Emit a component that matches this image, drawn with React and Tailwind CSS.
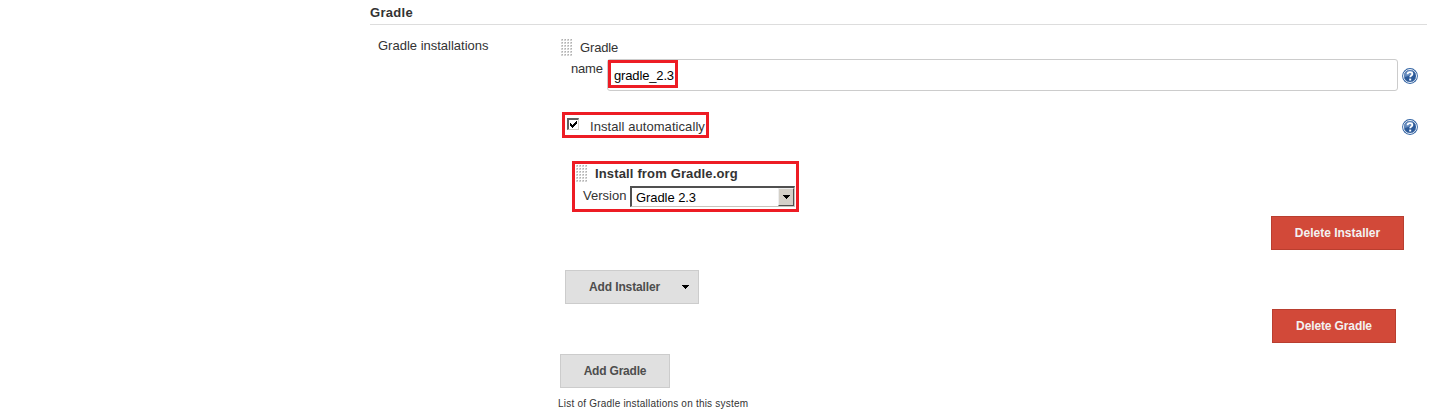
import React from "react";

function Grip() {
  const dots = [];
  for (let r = 0; r < 6; r++)
    for (let c = 0; c < 4; c++)
      dots.push(
        <g key={`${r}-${c}`}>
          <rect x={c * 3} y={r * 3} width="2" height="2" fill="#d4d4d4" />
          <rect x={c * 3 + 1} y={r * 3} width="1" height="1" fill="#b0b0b0" />
        </g>
      );
  return (
    <svg className="block shrink-0" width="12" height="18" viewBox="0 0 12 18" shapeRendering="crispEdges">
      {dots}
    </svg>
  );
}

function Help() {
  return (
    <svg className="block shrink-0" width="16" height="16" viewBox="0 0 16 16">
      <circle cx="8" cy="8" r="7.900" fill="#3465a4" />
      <circle cx="8" cy="8" r="6.500" fill="#2c5a99" stroke="#f0f4fa" strokeWidth="1" />
      <path d="M2.300 9a5.700 5.700 0 0 1 9-5.500c-1 3-4.500 5-9 5.500z" fill="#7d9fcd" opacity="0.700" />
      <path d="M5.500 6.300C5.600 4.700 6.600 4.200 8 4.200c1.500 0 2.400 0.700 2.400 1.900 0 1.500-2.200 1.500-2.200 3.200" fill="none" stroke="#ffffff" strokeWidth="1.800" />
      <rect x="7.200" y="10.600" width="2" height="1.900" fill="#ffffff" />
    </svg>
  );
}

function Arrow() {
  return (
    <svg className="block" width="7" height="4" viewBox="0 0 7 4" shapeRendering="crispEdges">
      <path d="M0 0h7v1H0zM1 1h5v1H1zM2 2h3v1H2zM3 3h1v1H3z" fill="#000" />
    </svg>
  );
}

export default function App() {
  return (
    <div className="h-[414px] w-[1444px] overflow-hidden bg-white pl-[370px] font-['Liberation_Sans',Arial,sans-serif] text-[13px] leading-4 text-[#333333]">
      <h2 className="h-[25px] w-[1057px] border-b border-[#dddddd] pt-[5px] font-bold tracking-[0.300px]">Gradle</h2>
      <div className="flex">
        <div className="w-[188px] shrink-0 pt-[13px] pl-[8px] whitespace-nowrap">Gradle installations</div>
        <div className="w-[870px] shrink-0">
          <div className="flex h-[34px] items-start gap-[7px] pt-[14px] pl-[3px]">
            <Grip />
            <span className="pt-[1px] tracking-[-0.150px]">Gradle</span>
          </div>
          <div className="flex h-8 items-start">
            <span className="w-[49px] pt-[2px] pl-[13px] tracking-[-0.200px]">name</span>
            <div className="h-8 w-[791px] rounded-[3px] border border-[#cccccc]">
              <div className="flex h-7 w-[70px] items-center border-3 border-[#ed1c24] bg-white pt-[4px] pl-[3px] tracking-[-0.150px] text-black">gradle_2.3</div>
            </div>
            <div className="pt-[9px] pl-1"><Help /></div>
          </div>
          <div className="mt-[21px] flex h-[26px] items-start justify-between pr-[10px] pl-1">
            <label className="flex h-[26px] w-[147px] items-start border-3 border-[#ed1c24] pt-[3px] pl-[2px]">
              <span className="flex h-3 w-3 shrink-0 items-center justify-center border-t-2 border-l-2 border-r border-b border-t-[#606060] border-l-[#606060] border-r-[#d4d0c8] border-b-[#d4d0c8]">
                <svg width="7" height="7" viewBox="0 0 7 7" shapeRendering="crispEdges">
                  <path d="M0 2h1v1h1v1h1V3h1V2h1V1h1V0h1v3H6v1H5v1H4v1H3v1H2V6H1V5H0z" fill="#000" />
                </svg>
              </span>
              <span className="pt-[1px] pl-[11px] tracking-[0.070px] whitespace-nowrap">Install automatically</span>
            </label>
            <div className="pt-[7px]"><Help /></div>
          </div>
          <div className="mt-[23px] ml-[14px] h-[51px] w-[227px] border-3 border-[#ed1c24]">
            <div className="flex h-[22px] items-start gap-[7px] pt-[1px] pl-[1px]">
              <Grip />
              <span className="pt-[1px] font-bold tracking-[0.150px] whitespace-nowrap">Install from Gradle.org</span>
            </div>
            <div className="flex items-start pl-2">
              <span className="w-[47px] pt-[2px]">Version</span>
              <div className="flex h-[21px] w-[165px] justify-between border-t-2 border-l-2 border-r border-b border-t-[#505050] border-l-[#505050] border-r-[#c8c4bc] border-b-[#c8c4bc] pl-1 text-black">
                <span className="pt-[2px] tracking-[-0.070px]">Gradle 2.3</span>
                <span className="flex h-[18px] w-4 items-center justify-center border border-t-[#eeeeee] border-l-[#eeeeee] border-r-[#505050] border-b-[#505050] bg-[#d4d0c8]"><Arrow /></span>
              </div>
            </div>
          </div>
          <div className="mt-1 mr-[24px] flex justify-end">
            <button className="h-[34px] w-[133px] border border-[#b93e2f] bg-[#d24939] text-[12px] font-bold text-[#f2f2f2]">Delete Installer</button>
          </div>
          <button className="mt-5 ml-[7px] flex h-[34px] w-[134px] items-center justify-between border border-[#cccccc] bg-[#e0e0e0] pr-[9px] pl-[23px] text-[12px] font-bold text-[#4d4d4d]">
            <span className="tracking-[-0.120px]">Add Installer</span>
            <Arrow />
          </button>
          <div className="mt-[5px] mr-[32px] flex justify-end">
            <button className="h-[34px] w-[124px] border border-[#b93e2f] bg-[#d24939] text-[12px] font-bold tracking-[-0.120px] text-[#f2f2f2]">Delete Gradle</button>
          </div>
          <button className="mt-[11px] ml-[2px] block h-[34px] w-[110px] border border-[#cccccc] bg-[#e0e0e0] text-[12px] font-bold tracking-[-0.200px] text-[#4d4d4d]">Add Gradle</button>
          <div className="mt-2 text-[10px] tracking-[0.210px]">List of Gradle installations on this system</div>
        </div>
      </div>
    </div>
  );
}
